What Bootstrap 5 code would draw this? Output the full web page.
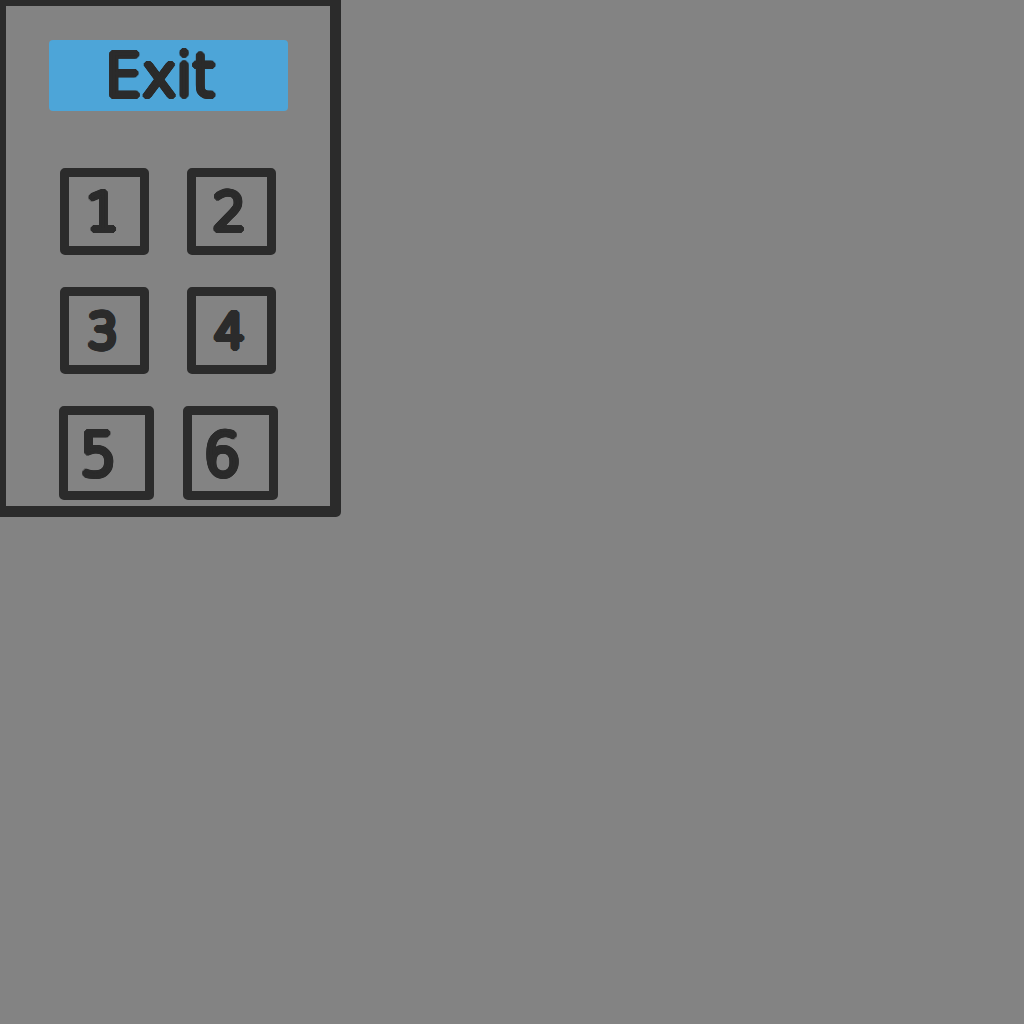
<!DOCTYPE html>
<html lang="en">
<head>
<meta charset="utf-8">
<meta name="viewport" content="width=device-width, initial-scale=1">
<title>Keypad</title>
<link href="https://cdn.jsdelivr.net/npm/bootstrap@5.3.0/dist/css/bootstrap.min.css" rel="stylesheet">
<style>
body { background: #838383; color: #2b2b2b; font-family: "DejaVu Sans", sans-serif; }
.keypad { border: solid #2b2b2b; border-width: 6px 11px 11px 6px; border-bottom-right-radius: 5px; padding: 34px 0 6px; }
/* marker-pen lettering: a thin face thickened evenly all round */
.keypad button {
  color: inherit; font-weight: 200; line-height: 1;
  text-shadow: 3px 0, -3px 0, 0 3px, 0 -3px, 2px 2px, -2px 2px, 2px -2px, -2px -2px,
    3px 1px, 3px -1px, -3px 1px, -3px -1px, 1px 3px, -1px 3px, 1px -3px, -1px -3px;
}
.exit-key { width: 239px; height: 71px; margin-bottom: 57px; padding: 0 16px 0 0; border: 0; border-radius: 4px; background: #4da5d8; font-size: 58px; }
.num-key { width: 89px; height: 87px; padding: 0 4px 0 0; border: 9px solid #2b2b2b; border-radius: 5px; background: transparent; font-size: 52px; }
.key-row { gap: 38px; margin-bottom: 32px; }
.key-row-small .num-key { font-size: 48px; }
.key-row-large { gap: 29px; margin-bottom: 0; }
.key-row-large .num-key { width: 95px; height: 94px; padding: 4px 16px 0 0; font-size: 58px; }
</style>
<script src="https://cdn.jsdelivr.net/npm/bootstrap@5.3.0/dist/js/bootstrap.bundle.min.js" defer></script>
</head>
<body>
<main class="container-fluid p-0">
  <div class="row g-0">
    <section class="keypad col-4 d-flex flex-column align-items-center" aria-label="Keypad">
      <button type="button" class="exit-key">Exit</button>
      <div class="key-row d-flex">
        <button type="button" class="num-key">1</button>
        <button type="button" class="num-key">2</button>
      </div>
      <div class="key-row key-row-small d-flex">
        <button type="button" class="num-key">3</button>
        <button type="button" class="num-key">4</button>
      </div>
      <div class="key-row key-row-large d-flex">
        <button type="button" class="num-key">5</button>
        <button type="button" class="num-key">6</button>
      </div>
    </section>
  </div>
</main>
</body>
</html>
